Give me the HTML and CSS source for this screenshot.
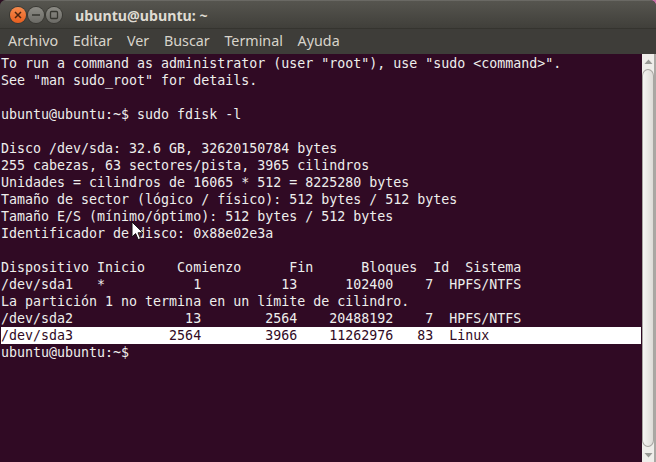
FILE: index.html
```html
<!DOCTYPE html>
<html lang="es">
<head>
<meta charset="utf-8">
<title>ubuntu@ubuntu: ~</title>
<link rel="stylesheet" href="styles.css">
</head>
<body>
<div class="window">
  <header class="titlebar">
    <div class="controls">
      <span class="btn btn-close"><svg width="16" height="16" viewBox="0 0 16 16"><path d="M5 5l6 6M11 5l-6 6" fill="none" stroke="#4a2410" stroke-width="1.5"/></svg></span>
      <span class="btn"><svg width="16" height="16" viewBox="0 0 16 16"><path d="M4 8h8" fill="none" stroke="#35352f" stroke-width="1.5"/></svg></span>
      <span class="btn"><svg width="16" height="16" viewBox="0 0 16 16"><rect x="4.500" y="4.500" width="7" height="7" rx="1" fill="none" stroke="#35352f" stroke-width="1.3"/></svg></span>
    </div>
    <span class="title">ubuntu@ubuntu: ~</span>
  </header>
  <nav class="menubar">
    <span class="menu-item">Archivo</span>
    <span class="menu-item">Editar</span>
    <span class="menu-item">Ver</span>
    <span class="menu-item">Buscar</span>
    <span class="menu-item">Terminal</span>
    <span class="menu-item">Ayuda</span>
  </nav>
  <main class="content">
    <div class="terminal">
<div class="line">To run a command as administrator (user "root"), use "sudo &lt;command&gt;".</div>
<div class="line">See "man sudo_root" for details.</div>
<div class="line"> </div>
<div class="line">ubuntu@ubuntu:~$ sudo fdisk -l</div>
<div class="line"> </div>
<div class="line">Disco /dev/sda: 32.6 GB, 32620150784 bytes</div>
<div class="line">255 cabezas, 63 sectores/pista, 3965 cilindros</div>
<div class="line">Unidades = cilindros de 16065 * 512 = 8225280 bytes</div>
<div class="line">Tamaño de sector (lógico / físico): 512 bytes / 512 bytes</div>
<div class="line">Tamaño E/S (mínimo/óptimo): 512 bytes / 512 bytes</div>
<div class="line">Identificador de disco: 0x88e02e3a</div>
<div class="line"> </div>
<div class="line">Dispositivo Inicio    Comienzo      Fin      Bloques  Id  Sistema</div>
<div class="line">/dev/sda1   *           1          13      102400    7  HPFS/NTFS</div>
<div class="line">La partición 1 no termina en un límite de cilindro.</div>
<div class="line">/dev/sda2              13        2564    20488192    7  HPFS/NTFS</div>
<div class="line selected">/dev/sda3            2564        3966    11262976   83  Linux</div>
<div class="line">ubuntu@ubuntu:~$</div>
      <svg class="cursor" width="13" height="20" viewBox="0 0 13 20"><path d="M1 1v15l3.6-3.4 2.6 6 2.4-1-2.6-5.8H12z" fill="#fff" stroke="#111" stroke-width="1"/></svg>
    </div>
    <div class="scrollbar">
      <div class="arrow"><svg width="9" height="6" viewBox="0 0 9 6"><path d="M4.500 0.500L8.500 5H.5z" fill="#9a9a96"/></svg></div>
      <div class="thumb"></div>
      <div class="arrow"><svg width="9" height="6" viewBox="0 0 9 6"><path d="M.5 1h8l-4 4.500z" fill="#9a9a96"/></svg></div>
    </div>
  </main>
</div>
</body>
</html>
```
FILE: styles.css
```css
* { box-sizing: border-box; }
html, body { margin: 0; height: 100%; }
body { width: 656px; height: 462px; overflow: hidden; background: linear-gradient(90deg, #2c0f22 50%, #c86fa8 50%); }
.window { width: 656px; height: 462px; display: flex; flex-direction: column; background: #3c3b37; border-radius: 6px 6px 0 0; overflow: hidden; }
.titlebar { height: 29px; display: flex; align-items: center; padding: 1px 0 0 10px; background: linear-gradient(#56554f, #403f3a); border-top: 1px solid #6a6964; border-bottom: 1px solid #35342f; flex: none; }
.controls { display: flex; gap: 2px; }
.btn { width: 16px; height: 16px; border-radius: 50%; background: linear-gradient(#8c8b85, #6c6b66); box-shadow: 0 0 0 1px #3a3934; display: block; }
.btn svg { display: block; }
.btn-close { background: linear-gradient(#f58a4d, #e85f1f); }
.title { margin-left: 13px; font: bold 14.2px "Noto Sans", "Open Sans", sans-serif; color: #dfdbd2; }
.menubar { height: 25px; display: flex; align-items: center; padding: 0 0 2px 8px; gap: 14.7px; background: #3e3d39; flex: none; }
.menu-item { font: 14.3px "Noto Sans", "Open Sans", sans-serif; color: #d8d4cb; }
.content { flex: 1; display: flex; min-height: 0; background: #a9a7a3; }
.terminal { position: relative; flex: 1; padding: 1px 0 0 1px; font: 13.3px/17px "DejaVu Sans Mono", monospace; color: #eeeeec; background: #300a24; }
.line { white-space: pre; height: 17px; }
.selected { background: #fff; color: #300a24; }
.cursor { position: absolute; left: 131px; top: 167px; }
.scrollbar { width: 13px; margin-right: 2px; display: flex; flex-direction: column; background: #efedea; border-left: 1px solid #300a24; flex: none; }
.arrow { height: 15px; display: flex; align-items: center; justify-content: center; flex: none; }
.thumb { flex: 1; background: linear-gradient(90deg, #f6f5f3, #dddbd7); border: 1px solid #a8a6a2; border-radius: 7px / 8px; }
```
